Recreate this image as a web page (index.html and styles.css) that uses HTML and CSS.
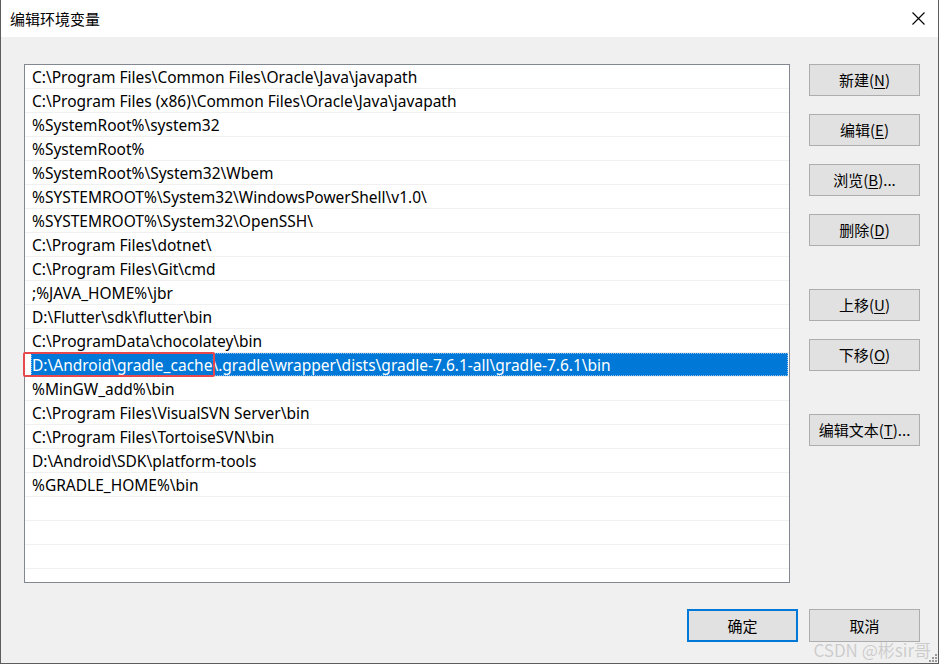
FILE: index.html
```html
<!DOCTYPE html>
<html lang="zh-CN">
<head>
<meta charset="utf-8">
<title>编辑环境变量</title>
<link rel="stylesheet" href="styles.css">
</head>
<body>
<div class="window">
  <div class="titlebar">
    <span class="title">编辑环境变量</span>
    <svg class="close" width="13" height="13" viewBox="0 0 13 13"><path d="M0.5 0.5 L12.5 12.5 M12.5 0.5 L0.5 12.5" stroke="#000" stroke-width="1.1" fill="none"/></svg>
  </div>
  <div class="content">
    <div class="main">
      <div class="list">
        <div class="row"><span class="label">C:\Program Files\Common Files\Oracle\Java\javapath</span></div>
        <div class="row"><span class="label">C:\Program Files (x86)\Common Files\Oracle\Java\javapath</span></div>
        <div class="row"><span class="label">%SystemRoot%\system32</span></div>
        <div class="row"><span class="label">%SystemRoot%</span></div>
        <div class="row"><span class="label">%SystemRoot%\System32\Wbem</span></div>
        <div class="row"><span class="label">%SYSTEMROOT%\System32\WindowsPowerShell\v1.0\</span></div>
        <div class="row"><span class="label">%SYSTEMROOT%\System32\OpenSSH\</span></div>
        <div class="row"><span class="label">C:\Program Files\dotnet\</span></div>
        <div class="row"><span class="label">C:\Program Files\Git\cmd</span></div>
        <div class="row"><span class="label">;%JAVA_HOME%\jbr</span></div>
        <div class="row"><span class="label">D:\Flutter\sdk\flutter\bin</span></div>
        <div class="row"><span class="label">C:\ProgramData\chocolatey\bin</span></div>
        <div class="row selected"><span class="label">D:\Android\gradle_cache\.gradle\wrapper\dists\gradle-7.6.1-all\gradle-7.6.1\bin</span><span class="mark"></span></div>
        <div class="row"><span class="label">%MinGW_add%\bin</span></div>
        <div class="row"><span class="label">C:\Program Files\VisualSVN Server\bin</span></div>
        <div class="row"><span class="label">C:\Program Files\TortoiseSVN\bin</span></div>
        <div class="row"><span class="label">D:\Android\SDK\platform-tools</span></div>
        <div class="row"><span class="label">%GRADLE_HOME%\bin</span></div>
        <div class="row"></div>
        <div class="row"></div>
        <div class="row"></div>
        <div class="filler"></div>
      </div>
      <div class="side">
        <div class="group">
          <button class="btn">新建(<u>N</u>)</button>
          <button class="btn">编辑(<u>E</u>)</button>
          <button class="btn">浏览(<u>B</u>)...</button>
          <button class="btn">删除(<u>D</u>)</button>
        </div>
        <div class="group">
          <button class="btn">上移(<u>U</u>)</button>
          <button class="btn">下移(<u>O</u>)</button>
        </div>
        <div class="group">
          <button class="btn">编辑文本(<u>T</u>)...</button>
        </div>
      </div>
    </div>
    <div class="footer">
      <button class="btn primary">确定</button>
      <button class="btn">取消</button>
    </div>
  </div>
  <div class="watermark">CSDN @彬sir哥</div>
  <svg class="grip" width="8" height="8" viewBox="0 0 8 8" fill="#9a9a9a">
    <rect x="6" y="0" width="2" height="2"/>
    <rect x="3" y="3" width="2" height="2"/><rect x="6" y="3" width="2" height="2"/>
    <rect x="0" y="6" width="2" height="2"/><rect x="3" y="6" width="2" height="2"/><rect x="6" y="6" width="2" height="2"/>
  </svg>
</div>
</body>
</html>
```

FILE: styles.css
```css
html, body {
  margin: 0;
  padding: 0;
  background: #f0f0f0;
}

.window {
  position: relative;
  box-sizing: border-box;
  width: 939px;
  height: 664px;
  border: 1px solid #5c5c5c;
  border-top: none;
  background: #f0f0f0;
  display: flex;
  flex-direction: column;
  font-family: "Noto Sans", "Noto Sans CJK SC", sans-serif;
  font-size: 15px;
  color: #000;
}

.titlebar {
  height: 37px;
  background: #fff;
  display: flex;
  align-items: center;
  justify-content: space-between;
  padding: 0 13px 0 9px;
  flex: none;
}

.title {
  font-family: "Noto Sans CJK SC", sans-serif;
  font-size: 15px;
  line-height: 20px;
}

.close {
  display: block;
}

.content {
  flex: 1;
  padding: 27px 18px 0 23px;
  display: flex;
  flex-direction: column;
}

.main {
  display: flex;
  gap: 19px;
}

.list {
  box-sizing: border-box;
  width: 766px;
  height: 519px;
  border: 1px solid #828790;
  background: #fff;
  display: flex;
  flex-direction: column;
}

.row {
  position: relative;
  flex: none;
  height: 23px;
  border-bottom: 1px solid #f0f0f0;
  padding: 0 1px 0 6px;
  display: flex;
}

.label {
  flex: 1;
  padding-left: 1px;
  padding-top: 1px;
  height: 22px;
  line-height: 23px;
  white-space: nowrap;
  font-size: 15.5px;
}

.selected .label {
  background: #0078d7;
  color: #fff;
  outline: 1px dotted rgba(255, 255, 255, 0.55);
  outline-offset: -1px;
}

.mark {
  position: absolute;
  left: -2px;
  top: -1px;
  width: 188px;
  height: 21px;
  border: 2px solid #e5484d;
  border-radius: 2px;
}

.filler {
  flex: 1;
}

.side {
  display: flex;
  flex-direction: column;
  gap: 43px;
}

.group {
  display: flex;
  flex-direction: column;
  gap: 18px;
}

.btn {
  box-sizing: border-box;
  width: 111px;
  height: 32px;
  margin: 0;
  padding: 0;
  border: 1px solid #adadad;
  background: #e1e1e1;
  font-family: "Noto Sans CJK SC", sans-serif;
  font-size: 15px;
  color: #000;
  line-height: 20px;
}

.btn u {
  text-decoration-thickness: 1px;
  text-underline-offset: 2px;
}

.btn.primary {
  border: 2px solid #0078d7;
}

.footer {
  margin-top: 26px;
  display: flex;
  justify-content: flex-end;
  gap: 11px;
}

.footer .btn {
  height: 33px;
}

.watermark {
  position: absolute;
  right: 7px;
  bottom: 3px;
  font-family: "Noto Sans CJK SC", sans-serif;
  font-size: 17px;
  line-height: 20px;
  color: rgba(160, 160, 160, 0.5);
  text-shadow: 0 0 1px rgba(255, 255, 255, 0.6);
}

.grip {
  position: absolute;
  right: 1px;
  bottom: 1px;
}
```
